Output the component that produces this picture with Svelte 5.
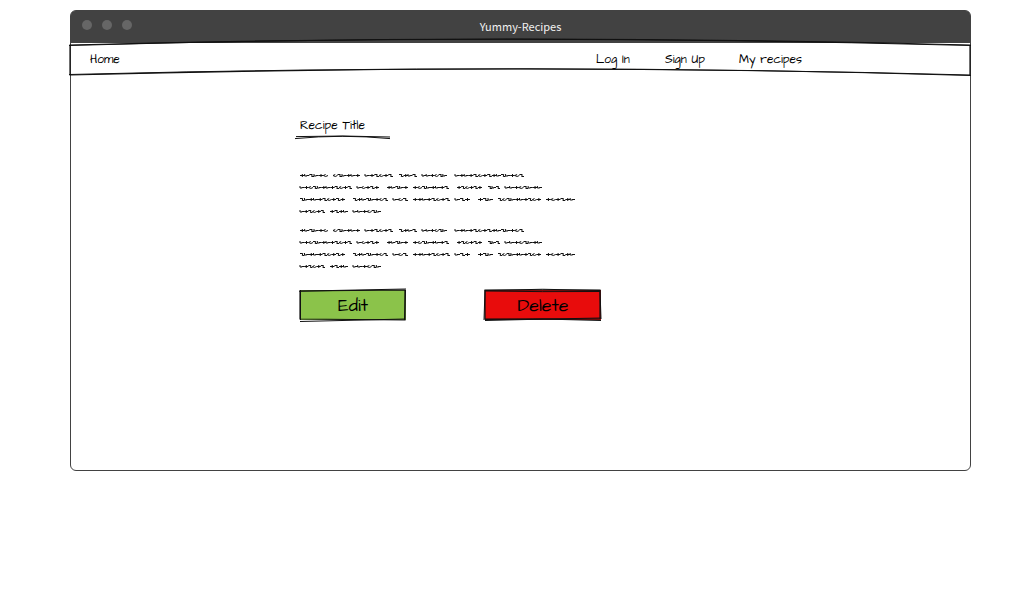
<script>
  const line1 = [[0, 28, 0], [33, 27, 1], [65, 28, 2], [99, 18, 3], [122, 25, 2], [155, 69, 2]];
  const line2 = [[0, 52, 2], [57, 22, 2], [87, 21, 0], [113, 36, 0], [157, 25, 0], [188, 12, 3], [205, 37, 2]];
  const line3 = [[0, 45, 3], [53, 35, 3], [93, 15, 2], [113, 37, 0], [155, 15, 2], [178, 15, 0], [198, 43, 3], [246, 29, 0]];
  const line4 = [[0, 25, 2], [30, 18, 0], [53, 28, 2]];
  const lines = [line1, line2, line3, line4];
  const paragraphs = ['Ingredients', 'Directions'];
  const order = [0, 2, 3, 2, 0, 1, 3, 2, 0, 2, 0, 3, 1, 0, 3];

  function scribble([x, width, first], row) {
    const y = 6.5 + row * 12;
    const count = Math.max(3, Math.round(width / 4.5));
    const step = width / count;
    let d = '';
    for (let i = 0; i < count; i++) {
      const kind = i === 0 ? first : order[(i + Math.round(x / 7) + row * 3) % order.length];
      const a = x + i * step;
      const b = a + step;
      const m = a + step / 2;
      if (kind === 0) d += `M${a} ${y}H${b}M${m} ${y - 1.5}V${y + 1.5}`;
      else if (kind === 1) d += `M${m} ${y - 1}L${a} ${y}L${m} ${y + 1}L${b} ${y}`;
      else if (kind === 2) d += `M${a} ${y - 1.5}V${y + 0.5}H${m}V${y - 0.5}M${m} ${y}H${b}`;
      else d += `M${a} ${y - 1}H${m + 0.5}L${m} ${y + 1}H${b}`;
    }
    return d;
  }
</script>

<div class="window">
  <header>
    <span class="dots"><i></i><i></i><i></i></span>
    <span class="name">Yummy-Recipes</span>
  </header>

  <nav>
    <svg class="sketch" viewBox="0 0 900 32" preserveAspectRatio="none" aria-hidden="true">
      <path d="M0 2Q450 -10 900 2V32Q450 20 0 32Z" />
      <path class="thin" d="M-1 2.5Q420 -10 901 2.5M-1 31.5Q470 19.5 901 32.5" />
    </svg>
    <a href="#home">Home</a>
    <div class="links">
      <a class="login" href="#login">Log In</a>
      <a class="signup" href="#signup">Sign Up</a>
      <a class="recipes" href="#recipes">My recipes</a>
    </div>
  </nav>

  <main>
    <h1>
      Recipe Title
      <svg class="rule" viewBox="0 0 96 6" aria-hidden="true">
        <path d="M1 1.6Q48 0.2 95 2" />
        <path class="thin" d="M0 3.6Q47 -1 95 3.6" />
      </svg>
    </h1>

    {#each paragraphs as label}
      <p>
        <svg viewBox="0 0 276 48" role="img" aria-label={label}>
          {#each lines as words, row}
            {#each words as word}
              <path d={scribble(word, row)} />
            {/each}
          {/each}
        </svg>
      </p>
    {/each}

    <div class="actions">
      <button class="edit">
        <svg class="sketch" viewBox="0 0 106 30" preserveAspectRatio="none" aria-hidden="true">
          <path d="M0 1L105 0L105 30L0 29Z" />
          <path class="thin" d="M-1 1.2L106 -1M0 31.5L105 29M105.5 0L104.5 30M0.5 0V30" />
        </svg>
        <span>Edit</span>
      </button>
      <button class="delete">
        <svg class="sketch" viewBox="0 0 116 30" preserveAspectRatio="none" aria-hidden="true">
          <path d="M0 0H115V29H0Z" />
          <path class="thin" d="M0 0.5Q58 -2 115 0.5M0 1Q58 2 115 1.5M0 29.5Q58 28 116 30.5M0 30.5Q58 29 116 28M0 0L-1 30M115 0L116 29" />
        </svg>
        <span>Delete</span>
      </button>
    </div>
  </main>
</div>

<style>
  :global(body) {
    background: #fff;
  }

  .window {
    box-sizing: border-box;
    min-height: 461px;
    margin: 10px 60px 0 70px;
    border: 1px solid #424242;
    border-radius: 6px;
    color: #000;
    font: 12px/18px "Architects Daughter", Lato, sans-serif;
  }

  header {
    display: grid;
    grid-template-columns: 1fr auto 1fr;
    align-items: center;
    height: 32px;
    border-radius: 4px 4px 0 0;
    background: #424242;
    color: #f2f2f2;
  }

  .dots {
    display: flex;
    gap: 10px;
    padding: 0 0 4px 11px;
  }

  .dots i {
    width: 10px;
    height: 10px;
    border-radius: 50%;
    background: #666;
  }

  .name {
    padding-bottom: 2px;
    font: 11px/16px "Noto Sans CJK SC", "Noto Sans", sans-serif;
  }

  nav {
    position: relative;
    box-sizing: border-box;
    display: flex;
    justify-content: space-between;
    align-items: center;
    height: 32px;
    padding: 2px 167px 0 19px;
  }

  nav a {
    position: relative;
    color: inherit;
    text-decoration: none;
    white-space: nowrap;
  }

  .links {
    display: flex;
  }

  .login {
    width: 69px;
  }

  .signup {
    width: 74px;
  }

  .recipes {
    width: 64px;
  }

  svg {
    overflow: visible;
    fill: none;
    stroke: #111;
  }

  .sketch {
    position: absolute;
    inset: 0;
    width: 100%;
    height: 100%;
  }

  .sketch path {
    stroke-width: 1.2;
    vector-effect: non-scaling-stroke;
  }

  svg .thin {
    stroke-width: 1;
  }

  nav .sketch {
    left: -1px;
    width: calc(100% + 1px);
  }

  main {
    padding: 42px 24px 24px 229px;
  }

  h1 {
    margin: 0 0 28px;
    font: inherit;
  }

  .rule {
    display: block;
    width: 96px;
    height: 6px;
    margin-left: -5px;
  }

  p {
    margin: 0 0 7px;
  }

  p svg {
    display: block;
    width: 276px;
    height: 48px;
    stroke-width: 1;
  }

  .actions {
    display: flex;
    gap: 79px;
    margin-top: 18px;
  }

  button {
    position: relative;
    height: 30px;
    padding: 2px 0 0;
    border: 0;
    color: #000;
    font: 18px/28px "Architects Daughter", Lato, sans-serif;
  }

  button span {
    position: relative;
  }

  .edit {
    width: 106px;
    background: #8bc34a;
  }

  .delete {
    width: 116px;
    background: #e80c0c;
  }
</style>
